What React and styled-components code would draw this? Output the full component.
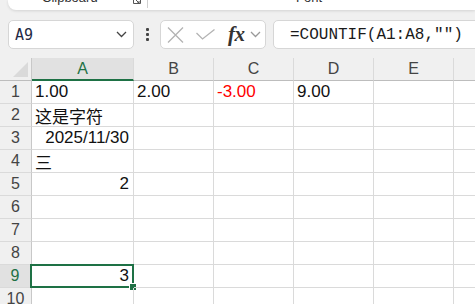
import React from "react";
import styled, { createGlobalStyle } from "styled-components";

const GlobalStyle = createGlobalStyle`
  html, body {
    margin: 0;
    padding: 0;
  }
  body {
    background: #f0f0f0;
    font-family: "Liberation Sans", "Noto Sans CJK SC", sans-serif;
    overflow: hidden;
    width: 475px;
    height: 304px;
  }
`;

const GREEN = "#1e7145";
const ROW_HGT = 23;

const COLS = [
  { name: "A", width: 102 },
  { name: "B", width: 80 },
  { name: "C", width: 80 },
  { name: "D", width: 80 },
  { name: "E", width: 80 },
  { name: "F", width: 80 },
];

// each row lists cells for A..F; empty means blank
const ROWS = [
  [{ v: "1.00" }, { v: "2.00" }, { v: "-3.00", red: true }, { v: "9.00" }],
  [{ v: "这是字符" }],
  [{ v: "2025/11/30", right: true }],
  [{ v: "三" }],
  [{ v: "2", right: true }],
  [],
  [],
  [],
  [{ v: "3", right: true, selected: true }],
  [],
];

const SELECTED_ROW = 9;
const SELECTED_COL = "A";

function Launcher() {
  return (
    <svg width="8" height="6" viewBox="0 0 8 6">
      <path d="M0.5 0 V3.5 H7.5 V0" fill="none" stroke="#555" strokeWidth="1" />
      <path d="M3 0 L6 3 M6 1 V3 H4" fill="none" stroke="#555" strokeWidth="1" />
    </svg>
  );
}

function Chevron({ color = "#444", size = 11 }) {
  return (
    <svg width={size} height="7" viewBox="0 0 11 7">
      <path d="M1 1 L5.5 5.5 L10 1" fill="none" stroke={color} strokeWidth="1.3" />
    </svg>
  );
}

function CrossIcon() {
  return (
    <svg width="17" height="16" viewBox="0 0 17 16">
      <path d="M1 0.5 L16 15.5 M16 0.5 L1 15.5" stroke="#b3b3b3" strokeWidth="1.3" fill="none" />
    </svg>
  );
}

function CheckIcon() {
  return (
    <svg width="19" height="11" viewBox="0 0 19 11">
      <path d="M0.5 4 L6.5 10 L18.5 0.5" stroke="#b3b3b3" strokeWidth="1.3" fill="none" />
    </svg>
  );
}

function CornerTriangle() {
  return (
    <svg width="15" height="15" viewBox="0 0 15 15">
      <polygon points="15,0 15,15 0,15" fill="#dadada" />
    </svg>
  );
}

export default function App() {
  return (
    <>
      <GlobalStyle />
      <Page>
        <Ribbon>
          <RibbonGroup $width={139}>
            <GroupLabel $left={34}>Clipboard</GroupLabel>
            <LauncherSlot>
              <Launcher />
            </LauncherSlot>
          </RibbonGroup>
          <RibbonDivider />
          <RibbonGroup $width={200}>
            <GroupLabel $left={148}>Font</GroupLabel>
          </RibbonGroup>
        </Ribbon>

        <Toolbar>
          <NameBox>
            <NameText>A9</NameText>
            <Chevron />
          </NameBox>
          <DotsWrap>
            <Dot />
            <Dot />
            <Dot />
          </DotsWrap>
          <FxBox>
            <IconSlot $ml={6}>
              <CrossIcon />
            </IconSlot>
            <IconSlot $ml={12}>
              <CheckIcon />
            </IconSlot>
            <FxText>fx</FxText>
            <IconSlot $ml={5}>
              <Chevron color="#999" size={11} />
            </IconSlot>
          </FxBox>
          <FormulaBox>
            <FormulaText>=COUNTIF(A1:A8,"")</FormulaText>
          </FormulaBox>
        </Toolbar>

        <Sheet>
          <Corner>
            <CornerTriangle />
          </Corner>
          {COLS.map((c) => (
            <ColHeader key={c.name} $active={c.name === SELECTED_COL}>
              {c.name}
            </ColHeader>
          ))}
          {ROWS.map((row, ri) => (
            <React.Fragment key={ri}>
              <RowHeader $active={ri + 1 === SELECTED_ROW}>{ri + 1}</RowHeader>
              {COLS.map((c, ci) => {
                const cell = row[ci];
                return (
                  <Cell key={c.name} $right={cell && cell.right} $red={cell && cell.red}>
                    {cell ? cell.v : ""}
                    {cell && cell.selected && (
                      <Selection>
                        <FillHandle />
                      </Selection>
                    )}
                  </Cell>
                );
              })}
            </React.Fragment>
          ))}
        </Sheet>
      </Page>
    </>
  );
}

const Page = styled.div`
  width: 475px;
  height: 304px;
  overflow: hidden;
  display: flex;
  flex-direction: column;
`;

const Ribbon = styled.div`
  height: 10px;
  margin-left: 8px;
  background: #ffffff;
  border-bottom-left-radius: 8px;
  box-shadow: 0 1px 3px rgba(0, 0, 0, 0.12);
  display: flex;
  overflow: hidden;
  flex-shrink: 0;
`;

const RibbonGroup = styled.div`
  width: ${(p) => p.$width}px;
  position: relative;
  display: flex;
`;

const GroupLabel = styled.div`
  margin-left: ${(p) => p.$left}px;
  margin-top: -9px;
  font-size: 13px;
  line-height: 13px;
  color: #333;
  white-space: nowrap;
`;

const LauncherSlot = styled.div`
  margin-left: auto;
  margin-right: 6px;
  display: flex;
  align-items: flex-start;
`;

const RibbonDivider = styled.div`
  width: 1px;
  height: 8px;
  background: #d0d0d0;
`;

const Toolbar = styled.div`
  height: 29px;
  margin-top: 10px;
  padding-left: 8px;
  display: flex;
  align-items: stretch;
  flex-shrink: 0;
`;

const NameBox = styled.div`
  width: 126px;
  box-sizing: border-box;
  background: #ffffff;
  border: 1px solid #d6d6d6;
  border-radius: 5px;
  display: flex;
  align-items: center;
  padding: 0 6px 0 6px;
  justify-content: space-between;
`;

const NameText = styled.span`
  font-family: "DejaVu Sans Mono", "Liberation Mono", monospace;
  font-size: 15px;
  color: #1f2a44;
`;

const DotsWrap = styled.div`
  width: 26px;
  display: flex;
  flex-direction: column;
  align-items: center;
  justify-content: center;
  gap: 2px;
`;

const Dot = styled.span`
  width: 3px;
  height: 3px;
  background: #444;
  border-radius: 1px;
`;

const FxBox = styled.div`
  width: 106px;
  box-sizing: border-box;
  background: #ffffff;
  border: 1px solid #d6d6d6;
  border-radius: 5px;
  display: flex;
  align-items: center;
`;

const IconSlot = styled.span`
  margin-left: ${(p) => p.$ml}px;
  display: flex;
  align-items: center;
`;

const FxText = styled.span`
  margin-left: 13px;
  font-family: "Liberation Serif", serif;
  font-style: italic;
  font-weight: bold;
  font-size: 21px;
  color: #333;
  letter-spacing: -0.5px;
  line-height: 1;
`;

const FormulaBox = styled.div`
  flex: 1;
  margin-left: 7px;
  margin-right: -20px;
  background: #ffffff;
  border: 1px solid #d6d6d6;
  border-radius: 5px;
  display: flex;
  align-items: center;
  padding-left: 16px;
`;

const FormulaText = styled.span`
  font-family: "Liberation Mono", monospace;
  font-size: 16px;
  color: #1a1a1a;
  white-space: nowrap;
`;

const Sheet = styled.div`
  margin-top: 9px;
  display: grid;
  grid-template-columns: 32px ${COLS.map((c) => `${c.width}px`).join(" ")};
  grid-auto-rows: ${ROW_HGT}px;
  background: #ffffff;
`;

const HeaderBase = styled.div`
  box-sizing: border-box;
  background: #f0f0f0;
  color: #444;
  font-size: 16px;
  display: flex;
  align-items: center;
  justify-content: center;
`;

const Corner = styled(HeaderBase)`
  border-right: 1px solid #c8c8c8;
  border-bottom: 1px solid #bdbdbd;
  align-items: flex-end;
  justify-content: flex-end;
  padding: 0 3px 3px 0;
`;

const ColHeader = styled(HeaderBase)`
  background: ${(p) => (p.$active ? "#e1e1e1" : "#f0f0f0")};
  color: ${(p) => (p.$active ? GREEN : "#444")};
  border-right: 1px solid #dadada;
  border-bottom: ${(p) => (p.$active ? `2px solid ${GREEN}` : "1px solid #bdbdbd")};
  padding-top: ${(p) => (p.$active ? "1px" : "0")};
`;

const RowHeader = styled(HeaderBase)`
  background: ${(p) => (p.$active ? "#e1e1e1" : "#f0f0f0")};
  color: ${(p) => (p.$active ? GREEN : "#444")};
  border-right: ${(p) => (p.$active ? `2px solid ${GREEN}` : "1px solid #c8c8c8")};
  border-bottom: 1px solid #dadada;
`;

const Cell = styled.div`
  position: relative;
  box-sizing: border-box;
  border-right: 1px solid #dadada;
  border-bottom: 1px solid #dadada;
  font-size: 17px;
  color: ${(p) => (p.$red ? "#ff0000" : "#111")};
  display: flex;
  align-items: center;
  justify-content: ${(p) => (p.$right ? "flex-end" : "flex-start")};
  padding: 0 4px 0 3px;
  white-space: nowrap;
`;

const Selection = styled.div`
  position: absolute;
  left: -2px;
  top: -1px;
  right: -1px;
  bottom: -1px;
  border: 2px solid ${GREEN};
  pointer-events: none;
`;

const FillHandle = styled.div`
  position: absolute;
  right: -5px;
  bottom: -5px;
  width: 6px;
  height: 6px;
  background: ${GREEN};
  border: 1px solid #ffffff;
`;
